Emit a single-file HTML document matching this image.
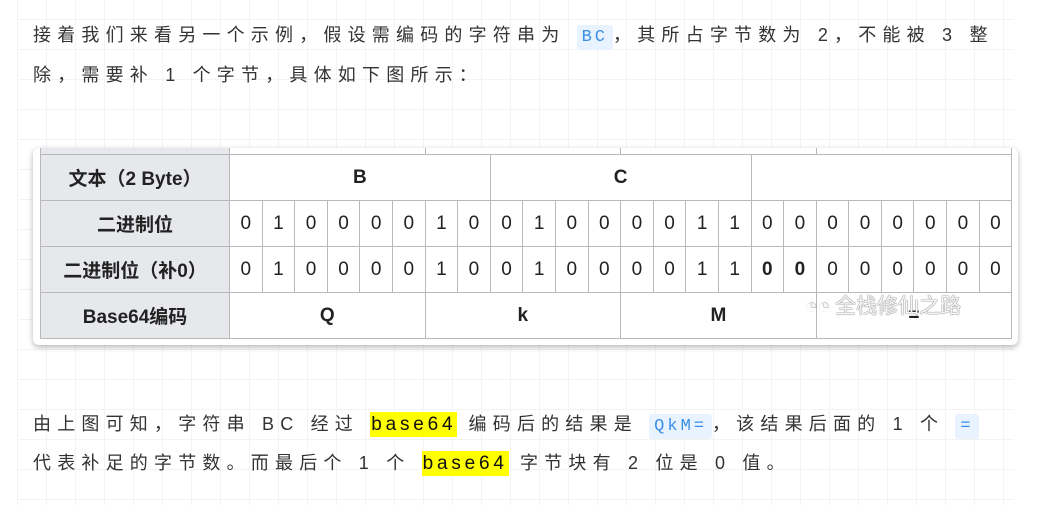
<!DOCTYPE html>
<html><head><meta charset="utf-8"><style>
*{margin:0;padding:0;box-sizing:border-box}
body{width:1062px;height:505px;overflow:hidden;background:#fff;position:relative;font-family:"Liberation Sans","Noto Sans CJK SC",sans-serif;color:#333}
.grid{position:absolute;left:17px;top:0;width:997px;height:505px;
background-image:linear-gradient(#f3f3f3 1px,transparent 1px),linear-gradient(90deg,#f3f3f3 1px,transparent 1px);
background-size:29px 30px;background-position:0 19px,0 0}
.line{position:absolute;left:33px;white-space:nowrap;font-size:18px;letter-spacing:6.2px;line-height:26px}
code{font-family:"Liberation Mono",monospace;background:#e8f3ff;color:#3a8ee6;border-radius:3px;padding:3px 5px;font-size:17px;letter-spacing:3px}
.hl{background:#ffff00;color:#111;padding:2px 1px;letter-spacing:3.8px;font-size:19px}
.card{position:absolute;left:33px;top:148px;width:985px;height:197px;background:#fff;border-radius:6px;box-shadow:0 2px 6px rgba(0,0,0,.3);overflow:hidden}
table{position:absolute;left:7px;top:-39px;border-collapse:collapse;table-layout:fixed}
td{border:1.5px solid #b8b8b8;height:46px;text-align:center;font-size:19px;color:#222;font-family:"Liberation Sans","Noto Sans CJK SC",sans-serif}
tr.r0 td{height:45px}
td.h{background:#e6e8ec;font-weight:bold;width:189px}
td.b{font-weight:bold}
.wm{position:absolute;left:805px;top:290px;font-size:21px;color:#f6f6f6;text-shadow:0 0 1px #666,0 0 1px #666;white-space:nowrap;font-family:"Noto Sans CJK SC",sans-serif}
</style></head><body>
<div class="grid"></div>
<div class="line" style="top:22px">接着我们来看另一个示例，假设需编码的字符串为 <code>BC</code>，其所占字节数为 2，不能被 3 整</div>
<div class="line" style="top:62px">除，需要补 1 个字节，具体如下图所示：</div>
<div class="card">
<table>
<colgroup><col style="width:189px"><col span="24" style="width:32.6px"></colgroup>
<tr class="r0"><td class="h"></td><td colspan="6"></td><td colspan="6"></td><td colspan="6"></td><td colspan="6"></td></tr>
<tr><td class="h">文本（2 Byte）</td><td colspan="8" class="b">B</td><td colspan="8" class="b">C</td><td colspan="8"></td></tr>
<tr><td class="h">二进制位</td><td>0</td><td>1</td><td>0</td><td>0</td><td>0</td><td>0</td><td>1</td><td>0</td><td>0</td><td>1</td><td>0</td><td>0</td><td>0</td><td>0</td><td>1</td><td>1</td><td>0</td><td>0</td><td>0</td><td>0</td><td>0</td><td>0</td><td>0</td><td>0</td></tr>
<tr><td class="h">二进制位（补0）</td><td>0</td><td>1</td><td>0</td><td>0</td><td>0</td><td>0</td><td>1</td><td>0</td><td>0</td><td>1</td><td>0</td><td>0</td><td>0</td><td>0</td><td>1</td><td>1</td><td class="b">0</td><td class="b">0</td><td>0</td><td>0</td><td>0</td><td>0</td><td>0</td><td>0</td></tr>
<tr><td class="h">Base64编码</td><td colspan="6" class="b">Q</td><td colspan="6" class="b">k</td><td colspan="6" class="b">M</td><td colspan="6" class="b">=</td></tr>
</table>
</div>
<div class="wm">◔◔ 全栈修仙之路</div>
<div class="line" style="top:411px">由上图可知，字符串 BC 经过 <span class="hl">base64</span> 编码后的结果是 <code>QkM=</code>，该结果后面的 1 个 <code>=</code></div>
<div class="line" style="top:450px">代表补足的字节数。而最后个 1 个 <span class="hl">base64</span> 字节块有 2 位是 0 值。</div>
</body></html>
